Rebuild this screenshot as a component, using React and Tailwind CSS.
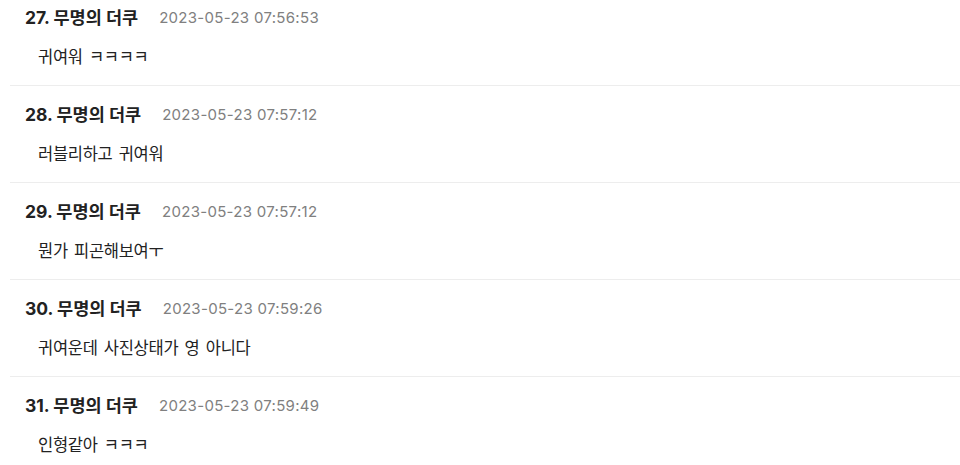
import React from "react";

const comments = [
  { no: 27, date: "2023-05-23 07:56:53", text: "귀여워 ㅋㅋㅋㅋ" },
  { no: 28, date: "2023-05-23 07:57:12", text: "러블리하고 귀여워" },
  { no: 29, date: "2023-05-23 07:57:12", text: "뭔가 피곤해보여ㅜ" },
  { no: 30, date: "2023-05-23 07:59:26", text: "귀여운데 사진상태가 영 아니다" },
  { no: 31, date: "2023-05-23 07:59:49", text: "인형같아 ㅋㅋㅋ" },
];

const CommentRow = ({ no, date, text }) => {
  return (
    <li className="border-b border-[#ededed] pt-[18px] pb-[17px] pl-[15px]">
      <div className="flex flex-row items-center h-[22px]">
        <span className="text-[17.5px] font-bold text-[#222]">
          {no}. 무명의 더쿠
        </span>
        <span className="ml-[21px] text-[15px] text-[#808080] tracking-[0.3px]">
          {date}
        </span>
      </div>
      <p className="mt-[17px] h-[22px] flex items-center pl-[13px] text-[16.5px] text-[#222] tracking-[-0.3px] [word-spacing:2px]">
        {text}
      </p>
    </li>
  );
};

export default function App() {
  return (
    <div
      className="w-[960px] h-[465px] overflow-hidden bg-white"
      style={{ fontFamily: '"Inter", "Noto Sans CJK KR", sans-serif' }}
    >
      <ul className="ml-[10px] -mt-[11px]">
        {comments.map((c) => (
          <CommentRow key={c.no} {...c} />
        ))}
      </ul>
    </div>
  );
}
